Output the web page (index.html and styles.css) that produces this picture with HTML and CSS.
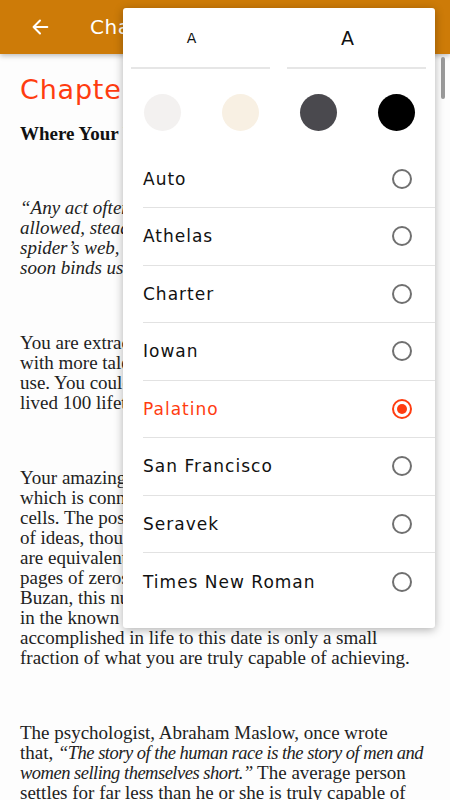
FILE: index.html
```html
<!DOCTYPE html>
<html>
<head>
    <meta charset="UTF-8">
    <meta name="viewport" content="width=device-width, initial-scale=1.0">
    <title>Reader</title>
    <link rel="stylesheet" href="styles.css">
</head>
<body>
    <header class="topbar">
        <svg class="back" width="22" height="22" viewBox="0 0 24 24">
            <path d="M20 12H5M12 5l-7 7 7 7" fill="none" stroke="#fff" stroke-width="2.2" stroke-linecap="round" stroke-linejoin="round"/>
        </svg>
        <span class="topbar-title">Chapter 1</span>
    </header>

    <main class="reader">
        <h1 class="chapter">Chapter 1</h1>
        <p class="lead">Where Your Potential Lies</p>
        <p class="quote">“Any act often repeated soon forms a habit; and<br>
            allowed, steadily gains in strength. At first it is<br>
            spider’s web, easily broken through, but if not<br>
            soon binds us with chains of steel.”</p>
        <p>You are extraordinary. You have been born<br>
            with more talents and abilities than you could<br>
            use. You could not exhaust your potential if you<br>
            lived 100 lifetimes.</p>
        <p>Your amazing brain has about 100 billion cells,<br>
            which is connected to as many as 20,000 other<br>
            cells. The possible number of combinations<br>
            of ideas, thoughts and images you can generate<br>
            are equivalent to the number one followed by<br>
            pages of zeros. According to brain expert Tony<br>
            Buzan, this number is greater than all the atoms<br>
            in the known universe. Whatever you have<br>
            accomplished in life to this date is only a small<br>
            fraction of what you are truly capable of achieving.</p>
        <p>The psychologist, Abraham Maslow, once wrote<br>
            that, <em>“The story of the human race is the story of men and<br>
            women selling themselves short.”</em> The average person<br>
            settles for far less than he or she is truly capable of<br>
            achieving.</p>
    </main>

    <div class="scrollbar"></div>

    <!-- Reading settings menu -->
    <div class="settings">
        <div class="sizes">
            <div class="size size-small">A</div>
            <div class="size size-large">A</div>
        </div>
        <div class="themes">
            <span class="swatch" style="background:#f3f1f0"></span>
            <span class="swatch" style="background:#f8f0e3"></span>
            <span class="swatch" style="background:#4a494e"></span>
            <span class="swatch" style="background:#000"></span>
        </div>
        <ul class="fonts">
            <li class="font-item">Auto <span class="radio"></span></li>
            <li class="font-item">Athelas <span class="radio"></span></li>
            <li class="font-item">Charter <span class="radio"></span></li>
            <li class="font-item">Iowan <span class="radio"></span></li>
            <li class="font-item selected">Palatino <span class="radio"></span></li>
            <li class="font-item">San Francisco <span class="radio"></span></li>
            <li class="font-item">Seravek <span class="radio"></span></li>
            <li class="font-item">Times New Roman <span class="radio"></span></li>
        </ul>
    </div>
</body>
</html>
```

FILE: styles.css
```css
body {
    margin: 0;
    background: #fdfdfd;
    font-family: "DejaVu Sans", sans-serif;
    overflow: hidden;
    height: 800px;
}

.topbar {
    height: 54px;
    background-color: #cd7b08;
    display: flex;
    align-items: center;
    padding-left: 29px;
    gap: 39px;
    box-shadow: 0 2px 5px rgba(0, 0, 0, 0.25);
    position: relative;
}

.topbar-title {
    color: #fff;
    font-size: 20px;
    letter-spacing: 0.6px;
}

.reader {
    padding: 19px 20px 0;
    font-family: "Liberation Serif", serif;
    color: #222;
}

.chapter {
    margin: 0 0 17px;
    font-family: "DejaVu Sans", sans-serif;
    font-weight: normal;
    font-size: 27px;
    line-height: 34px;
    letter-spacing: 0.8px;
    color: #ff3c10;
}

.reader p {
    margin: 0 0 55px;
    font-size: 19px;
    line-height: 20px;
    white-space: nowrap;
}

.reader em {
    font-size: 18.5px;
    letter-spacing: -0.5px;
}

.reader .lead {
    font-weight: bold;
    color: #111;
    margin-bottom: 54px;
}

.reader .quote {
    margin-bottom: 55px;
}

.quote {
    font-style: italic;
}

.scrollbar {
    position: absolute;
    top: 57px;
    right: 5px;
    width: 4px;
    height: 42px;
    border-radius: 2px;
    background: #9a9a9a;
}

/* Settings menu */
.settings {
    position: absolute;
    top: 8px;
    left: 123px;
    width: 312px;
    height: 620px;
    background: #fff;
    border-radius: 3px;
    box-shadow: 0 2px 10px rgba(0, 0, 0, 0.3);
    color: #111;
}

.sizes {
    display: flex;
    gap: 17px;
    padding: 0 9px 0 8px;
}

.size {
    flex: 1;
    height: 59px;
    border-bottom: 2px solid #e6e6e6;
    display: flex;
    align-items: center;
    justify-content: center;
    padding-right: 18px;
}

.size-small {
    font-size: 14px;
}

.size-large {
    font-size: 19px;
}

.themes {
    display: grid;
    grid-template-columns: repeat(4, 1fr);
    justify-items: center;
    padding: 25px 0 19.5px;
}

.swatch {
    width: 37px;
    height: 37px;
    border-radius: 50%;
}

.fonts {
    list-style: none;
    margin: 0;
    padding: 0 0 0 20px;
}

.font-item {
    height: 57.5px;
    box-sizing: border-box;
    border-bottom: 1px solid #e2e2e2;
    display: flex;
    align-items: center;
    justify-content: space-between;
    padding-right: 23px;
    font-size: 17px;
    letter-spacing: 1px;
}

.font-item:last-child {
    border-bottom: none;
}

.radio {
    width: 16px;
    height: 16px;
    border: 2px solid #707070;
    border-radius: 50%;
    position: relative;
}

.selected {
    color: #ff3c10;
}

.selected .radio {
    border-color: #ff3c10;
}

.selected .radio::after {
    content: "";
    position: absolute;
    top: 3px;
    left: 3px;
    width: 10px;
    height: 10px;
    border-radius: 50%;
    background: #ff3c10;
}
```
